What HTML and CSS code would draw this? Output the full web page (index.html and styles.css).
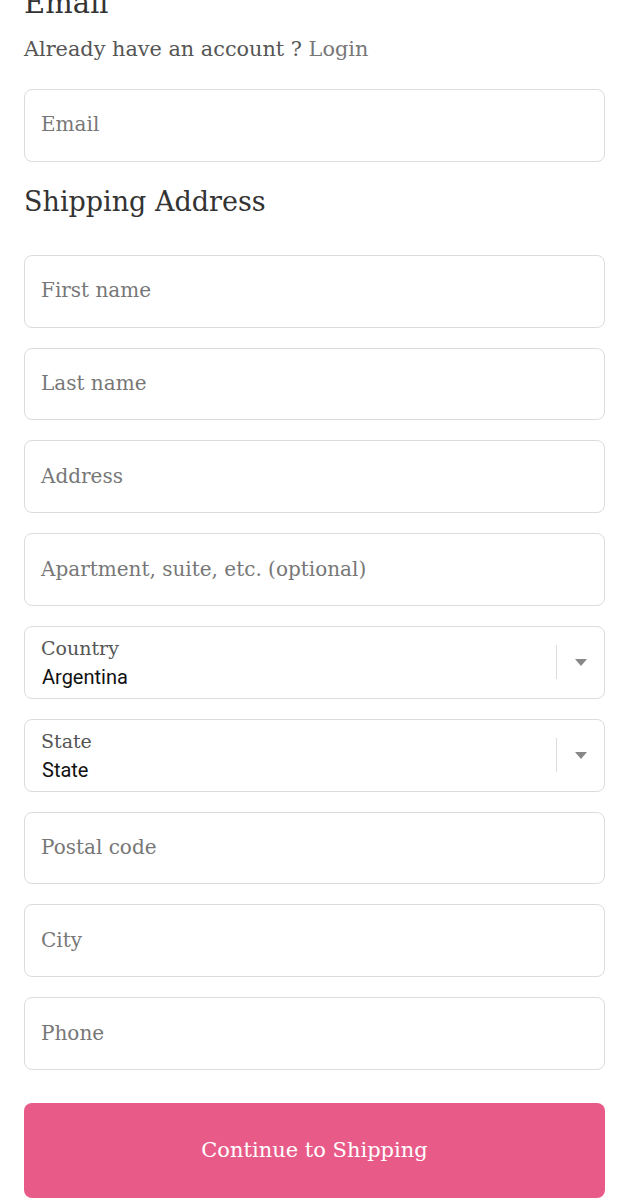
FILE: index.html
```html
<!DOCTYPE html>
<html lang="en">
  <head>
    <meta charset="UTF-8" />
    <title>Checkout</title>
    <link rel="stylesheet" href="styles.css">
  </head>
  <body>
    <div class="checkout">
      <h2 class="heading heading-top">Email</h2>
      <p class="account">Already have an account ? <a href="#" class="login">Login</a></p>

      <div class="field email-field"><span class="placeholder">Email</span></div>

      <h2 class="heading heading-section">Shipping Address</h2>

      <div class="fields">
        <div class="field"><span class="placeholder">First name</span></div>
        <div class="field"><span class="placeholder">Last name</span></div>
        <div class="field"><span class="placeholder">Address</span></div>
        <div class="field"><span class="placeholder">Apartment, suite, etc. (optional)</span></div>

        <div class="field select">
          <div class="select-text">
            <span class="select-label">Country</span>
            <span class="select-value">Argentina</span>
          </div>
          <div class="select-arrow"><span class="caret"></span></div>
        </div>

        <div class="field select">
          <div class="select-text">
            <span class="select-label">State</span>
            <span class="select-value">State</span>
          </div>
          <div class="select-arrow"><span class="caret"></span></div>
        </div>

        <div class="field"><span class="placeholder">Postal code</span></div>
        <div class="field"><span class="placeholder">City</span></div>
        <div class="field"><span class="placeholder">Phone</span></div>
      </div>

      <button class="continue">Continue to Shipping</button>
    </div>
  </body>
</html>
```

FILE: styles.css
```css
* {
  margin: 0;
  padding: 0;
  box-sizing: border-box;
}

body {
  width: 629px;
  height: 1200px;
  overflow: hidden;
  background: #ffffff;
  font-family: "DejaVu Serif", "Liberation Serif", serif;
  color: #333333;
}

.checkout {
  padding: 0 24px;
  margin-top: -15px;
}

.heading {
  font-size: 27px;
  font-weight: normal;
  color: #333333;
  line-height: 36px;
}

.heading-top {
  height: 36px;
  font-size: 29px;
}

.heading-section {
  margin-top: 22px;
  margin-bottom: 35px;
}

.account {
  font-size: 20.8px;
  line-height: 32px;
  margin-top: 12px;
  color: #555555;
}

.login {
  color: #777777;
  text-decoration: none;
}

.field {
  height: 72.8px;
  border: 1px solid #dcdcdc;
  border-radius: 8px;
  display: flex;
  align-items: center;
  padding: 0 16px 2px;
}

.email-field {
  margin-top: 24px;
}

.placeholder {
  font-size: 20px;
  color: #777777;
}

.fields {
  display: flex;
  flex-direction: column;
  gap: 20px;
}

.select {
  padding-right: 0;
  padding-bottom: 0;
}

.select-text {
  flex: 1;
  display: flex;
  flex-direction: column;
  line-height: 29px;
  padding-top: 2px;
}

.select-label {
  font-size: 19px;
  color: #555555;
}

.select-value {
  font-family: Roboto, "Liberation Sans", sans-serif;
  font-size: 20px;
  color: #111111;
  padding-left: 1px;
}

.select-arrow {
  width: 48px;
  height: 34px;
  border-left: 1px solid #dcdcdc;
  display: flex;
  align-items: center;
  justify-content: center;
}

.caret {
  width: 0;
  height: 0;
  border-left: 6px solid transparent;
  border-right: 6px solid transparent;
  border-top: 7px solid #888888;
}

.continue {
  display: block;
  width: 100%;
  height: 95px;
  margin-top: 33px;
  border: none;
  border-radius: 8px;
  background: #e85b89;
  color: #ffffff;
  font-family: "DejaVu Serif", "Liberation Serif", serif;
  font-size: 21px;
}
```
